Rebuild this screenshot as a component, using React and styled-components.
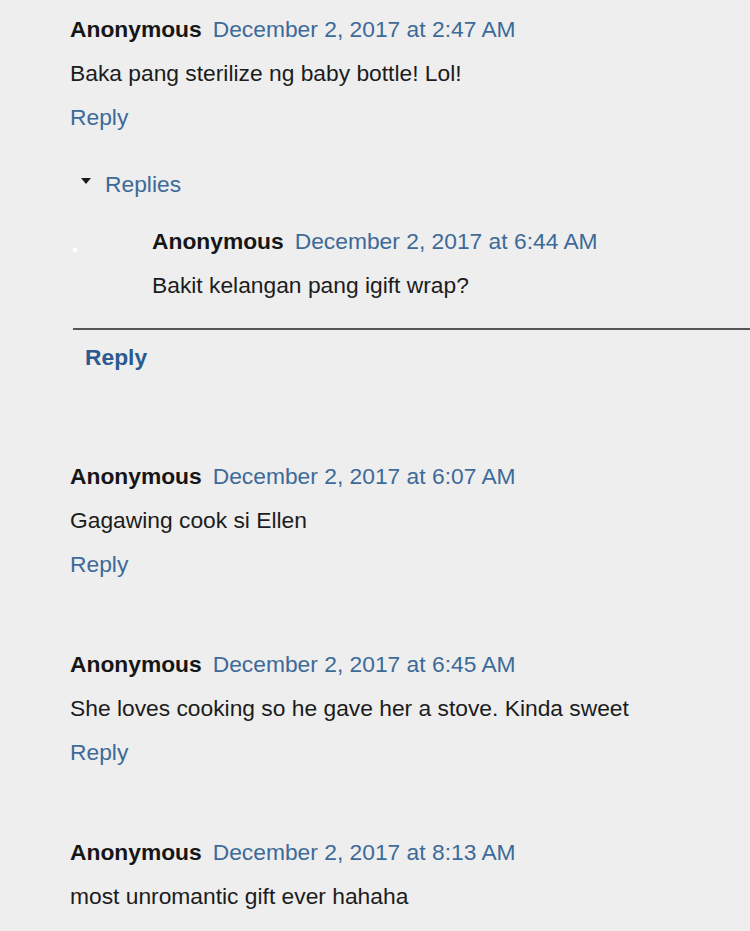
import React from "react";
import styled, { createGlobalStyle } from "styled-components";

const Global = createGlobalStyle`
  html, body { margin: 0; padding: 0; background: #eeeeee; }
  body { font-family: "Liberation Sans", Arial, sans-serif; overflow: hidden; }
`;

const Page = styled.div`
  width: 750px;
  height: 931px;
  overflow: hidden;
  background: #eeeeee;
  padding-top: 7px;
  box-sizing: border-box;
  font-size: 22.8px;
  line-height: 44px;
  color: #1c1c1c;
`;

const Comment = styled.div`
  padding-left: ${(p) => p.$indent ?? 70}px;
  margin-bottom: ${(p) => p.$gap ?? 56}px;
  position: relative;
`;

const Header = styled.div`
  display: flex;
  align-items: baseline;
  gap: 11px;
  white-space: nowrap;
`;

const Name = styled.span`
  font-weight: bold;
  color: #161616;
`;

const Stamp = styled.a`
  color: #3d6a98;
  text-decoration: none;
`;

const Body = styled.div`
  white-space: nowrap;
`;

const ReplyLink = styled.a`
  display: block;
  color: #3d6a98;
  text-decoration: none;
  font-weight: ${(p) => (p.$bold ? "bold" : "normal")};
  ${(p) => p.$bold && "color: #2a5a8e;"}
`;

const Thread = styled.div`
  margin: 23px 0 75px 73px;
`;

const Toggle = styled.div`
  display: flex;
  align-items: center;
  padding-left: 8px;
  gap: 14px;
  color: #3d6a98;
  margin-bottom: 13px;
`;

const Caret = styled.span`
  width: 0;
  height: 0;
  border-left: 5px solid transparent;
  border-right: 5px solid transparent;
  border-top: 6px solid #1a1a1a;
  margin-top: -6px;
`;

const Dot = styled.span`
  position: absolute;
  left: 0;
  top: 29px;
  width: 4px;
  height: 4px;
  background: #ffffff;
`;

const Continue = styled.div`
  margin-top: 21px;
  border-top: 2px solid #555555;
  padding-top: 5px;
  padding-left: 12px;
`;

const comments = [
  { date: "December 2, 2017 at 6:07 AM", text: "Gagawing cook si Ellen" },
  { date: "December 2, 2017 at 6:45 AM", text: "She loves cooking so he gave her a stove. Kinda sweet" },
  { date: "December 2, 2017 at 8:13 AM", text: "most unromantic gift ever hahaha" },
];

export default function App() {
  return (
    <Page>
      <Global />
      <Comment $gap={0}>
        <Header>
          <Name>Anonymous</Name>
          <Stamp>December 2, 2017 at 2:47 AM</Stamp>
        </Header>
        <Body>Baka pang sterilize ng baby bottle! Lol!</Body>
        <ReplyLink>Reply</ReplyLink>
      </Comment>
      <Thread>
        <Toggle>
          <Caret />
          <span>Replies</span>
        </Toggle>
        <Comment $indent={79} $gap={0}>
          <Dot />
          <Header>
            <Name>Anonymous</Name>
            <Stamp>December 2, 2017 at 6:44 AM</Stamp>
          </Header>
          <Body>Bakit kelangan pang igift wrap?</Body>
        </Comment>
        <Continue>
          <ReplyLink $bold>Reply</ReplyLink>
        </Continue>
      </Thread>
      {comments.map((c, i) => (
        <Comment key={i}>
          <Header>
            <Name>Anonymous</Name>
            <Stamp>{c.date}</Stamp>
          </Header>
          <Body>{c.text}</Body>
          <ReplyLink>Reply</ReplyLink>
        </Comment>
      ))}
    </Page>
  );
}
